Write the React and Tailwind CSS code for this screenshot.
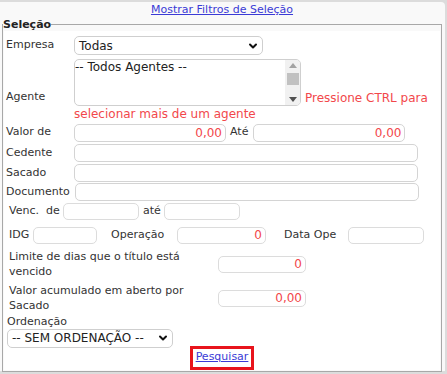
import { ChevronDown } from 'lucide-react';

const font = { fontFamily: '"DejaVu Sans", Verdana, sans-serif' };

function Input({ w, value = '', h = 'h-[18px]', className = '' }) {
  return (
    <div className={`${w} ${h} ${className} border border-[#d4d4d4] rounded-[5px] bg-white flex items-center justify-end pr-[3px] text-[12px] text-[#f2474b]`}>
      {value}
    </div>
  );
}

function Select({ w, label }) {
  return (
    <div className={`${w} h-[19px] border border-[#cfcfcf] rounded-[5px] bg-white flex items-center justify-between pl-[4px] pr-[3px] text-[12px] text-[#222]`}>
      <span>{label}</span>
      <ChevronDown size={12} strokeWidth={4} color="#111" />
    </div>
  );
}

export default function App() {
  return (
    <div style={font} className="w-[447px] h-[374px] bg-[#dcdcdc] pt-[2px] pr-[2px] pb-[3px] text-[11px] text-[#333]">
      <div className="h-full bg-[#f9f9f9] rounded-tr-[4px] flex flex-col pl-[2px] pr-[3px]">
        <div className="h-[21px] flex items-center justify-center">
          <a href="#" className="text-[#3b3bd6] underline text-[11px]">Mostrar Filtros de Seleção</a>
        </div>
        <fieldset className="border border-[#a8a8a8] flex-1 pb-[1px] px-[1px]">
          <legend className="font-bold text-[11px] text-[#222] leading-[12px] ml-[-1px]">Seleção</legend>
          <div className="bg-white h-full pt-[4px] flex flex-col">
            {/* Empresa */}
            <div className="flex items-center h-[22px]">
              <span className="w-[70px] pl-[2px]">Empresa</span>
              <Select w="w-[189px]" label="Todas" />
            </div>
            {/* Agente */}
            <div className="flex items-center mt-[2px]">
              <span className="w-[70px] pl-[2px] pt-[14px]">Agente</span>
              <div className="w-[366px] text-[12px] leading-[16px] text-[#f2474b]">
                <div className="inline-flex align-bottom w-[227px] h-[47px] border border-[#cfcfcf] rounded-[5px] bg-white overflow-hidden">
                  <div className="flex-1 text-[12px] leading-[12px] text-[#222] pt-[1px]">-- Todos Agentes --</div>
                  <div className="w-[15px] bg-[#f1f1f1] flex flex-col items-center justify-between py-[3px]">
                    <svg width="8" height="5" viewBox="0 0 8 5"><path d="M0 5 L4 0 L8 5 Z" fill="#a3a3a3" /></svg>
                    <div className="w-[12px] h-[12px] bg-[#c1c1c1] -mt-[6px]" />
                    <svg width="8" height="5" viewBox="0 0 8 5"><path d="M0 0 L8 0 L4 5 Z" fill="#505050" /></svg>
                  </div>
                </div>
                <span className="ml-[4px]">Pressione CTRL para</span>
                <br />
                <span>selecionar mais de um agente</span>
              </div>
            </div>
            {/* Valor de */}
            <div className="flex items-center h-[20px] mt-[1px]">
              <span className="w-[70px] pl-[2px]">Valor de</span>
              <Input w="w-[152px]" value="0,00" />
              <span className="ml-[4px] mr-[5px]">Até</span>
              <Input w="w-[152px]" value="0,00" />
            </div>
            {/* Cedente */}
            <div className="flex items-center h-[19px] mt-[1px]">
              <span className="w-[70px] pl-[2px]">Cedente</span>
              <Input w="w-[344px]" />
            </div>
            <div className="flex items-center h-[19px] mt-[1px]">
              <span className="w-[70px] pl-[2px]">Sacado</span>
              <Input w="w-[344px]" />
            </div>
            <div className="flex items-center h-[19px]">
              <span className="w-[70px] pl-[2px] whitespace-nowrap">Documento</span>
              <Input w="w-[344px]" className="ml-[1px]" />
            </div>
            {/* Venc */}
            <div className="flex items-center h-[17px] mt-[1px] pl-[5px]">
              <span className="w-[37px]">Venc.</span>
              <span className="w-[17px]">de</span>
              <Input w="w-[76px]" h="h-[17px]" className="border-[#dcdcdc]" />
              <span className="ml-[4px] w-[21px]">até</span>
              <Input w="w-[76px]" h="h-[17px]" className="border-[#dcdcdc]" />
            </div>
            {/* IDG */}
            <div className="flex items-center h-[17px] mt-[7px] pl-[5px]">
              <span className="w-[24px]">IDG</span>
              <Input w="w-[64px]" h="h-[17px]" className="border-[#dcdcdc]" />
              <span className="ml-[14px] w-[66px]">Operação</span>
              <Input w="w-[89px]" h="h-[17px]" value="0" className="border-[#dcdcdc]" />
              <span className="ml-[18px] w-[64px]">Data Ope</span>
              <Input w="w-[76px]" h="h-[17px]" className="border-[#dcdcdc]" />
            </div>
            {/* Limite */}
            <div className="flex items-center h-[29px] mt-[6px] pl-[5px]">
              <span className="w-[209px] leading-[15px]">Limite de dias que o título está vencido</span>
              <Input w="w-[88px]" h="h-[17px]" value="0" className="border-[#dcdcdc]" />
            </div>
            <div className="flex items-center h-[29px] mt-[5px] pl-[5px]">
              <span className="w-[209px] leading-[15px]">Valor acumulado em aberto por Sacado</span>
              <Input w="w-[88px]" h="h-[17px]" value="0,00" className="border-[#dcdcdc]" />
            </div>
            <div className="pl-[3px] mt-[2px] leading-[13px]">Ordenação</div>
            <div className="pl-[3px] mt-[1px]">
              <Select w="w-[166px]" label="-- SEM ORDENAÇÃO --" />
            </div>
            <div className="flex justify-center mt-[-2px]">
              <div className="border-[3px] border-[#e8141c] w-[64px] h-[24px] flex items-center justify-center">
                <a href="#" className="text-[#3b3bd6] underline text-[11px]">Pesquisar</a>
              </div>
            </div>
          </div>
        </fieldset>
      </div>
    </div>
  );
}
